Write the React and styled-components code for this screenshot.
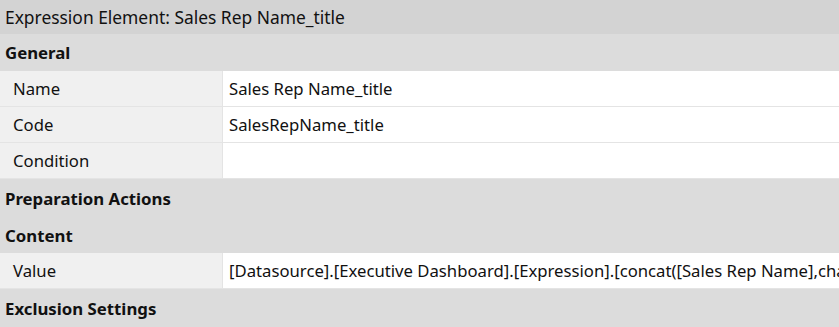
import styled, { createGlobalStyle } from 'styled-components'

const Global = createGlobalStyle`
    body {
        margin: 0;
        background: #fff;
        font-family: "Segoe UI", "Noto Sans", sans-serif;
        color: #111;
    }
`

const Panel = styled.div`
    width: 839px;
    height: 327px;
    overflow: hidden;
    display: flex;
    flex-direction: column;
`

const TitleBar = styled.div`
    height: 34px;
    flex: none;
    display: flex;
    align-items: center;
    padding-left: 5px;
    background: #d3d3d3;
    font-size: 17.4px;
    white-space: nowrap;
`

const Section = styled.div`
    height: ${p => p.h || 37}px;
    flex: none;
    display: flex;
    align-items: center;
    padding-left: 5px;
    background: #dcdcdc;
    font-size: 16.8px;
    font-weight: 700;
`

const Row = styled.div`
    height: 35px;
    flex: none;
    display: grid;
    grid-template-columns: 222px 1fr;
    column-gap: 1px;
    background: #e4e4e4;
    border-bottom: 1px solid #e4e4e4;
    font-size: 16.7px;
`

const Label = styled.div`
    display: flex;
    align-items: center;
    padding-left: 13px;
    background: #f0f0f0;
`

const Value = styled.div`
    display: flex;
    align-items: center;
    padding-left: 6px;
    background: #fff;
    white-space: nowrap;
    overflow: hidden;
`

const rows = {
    general: [
        ['Name', 'Sales Rep Name_title'],
        ['Code', 'SalesRepName_title'],
        ['Condition', ''],
    ],
    content: [
        ['Value', '[Datasource].[Executive Dashboard].[Expression].[concat([Sales Rep Name],char(13),"title")]'],
    ],
}

function PropRow({ label, value }) {
    return (
        <Row>
            <Label>{label}</Label>
            <Value>{value}</Value>
        </Row>
    )
}

export default function App() {
    return (
        <Panel>
            <Global />
            <TitleBar>Expression Element: Sales Rep Name_title</TitleBar>
            <Section>General</Section>
            {rows.general.map(r => <PropRow key={r[0]} label={r[0]} value={r[1]} />)}
            <Section h={38}>Preparation Actions</Section>
            <Section h={36}>Content</Section>
            {rows.content.map(r => <PropRow key={r[0]} label={r[0]} value={r[1]} />)}
            <Section h={38}>Exclusion Settings</Section>
        </Panel>
    )
}
